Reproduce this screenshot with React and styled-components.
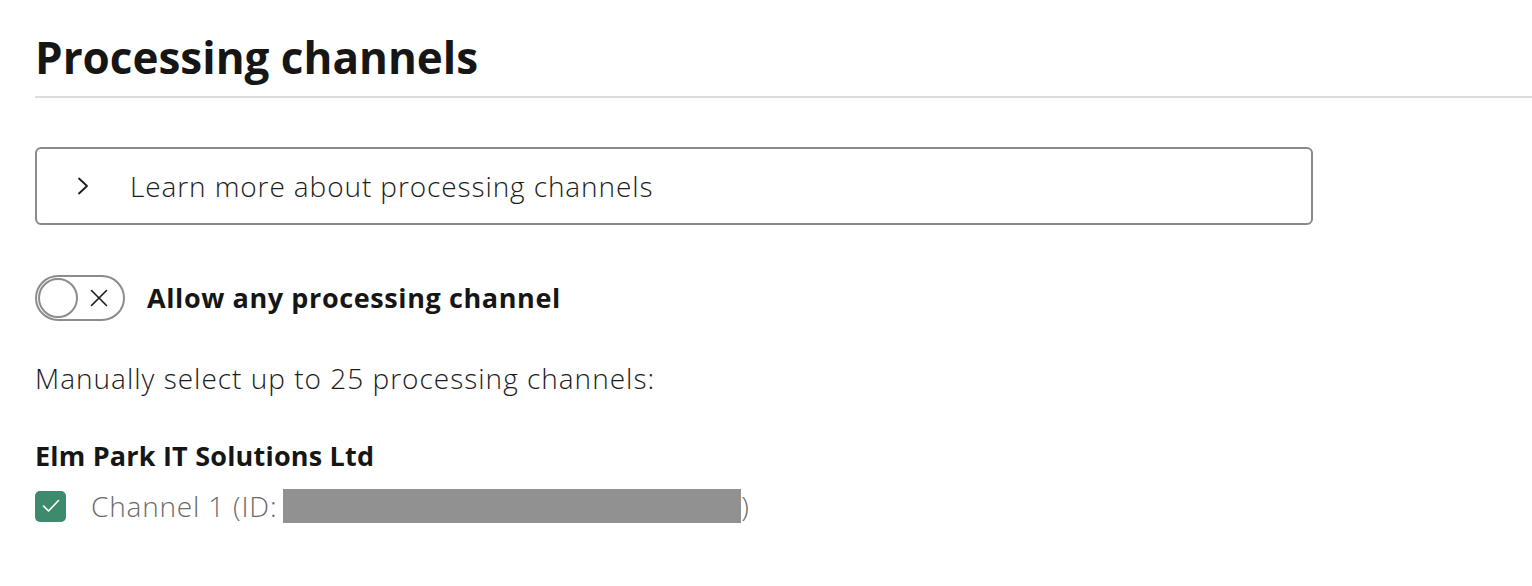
import styled, { createGlobalStyle } from "styled-components";

const GlobalStyle = createGlobalStyle`
    html, body {
        margin: 0;
        padding: 0;
        background: #ffffff;
    }
    body {
        font-family: "Open Sans", "Lato", sans-serif;
        color: #1c1c1c;
    }
`

const ChevronIcon = () => (
    <svg width="16" height="20" viewBox="0 0 16 20" fill="none">
        <path d="M4 2.5 L12 10 L4 17.5" stroke="#1c1c1c" strokeWidth="1.8" strokeLinecap="round" strokeLinejoin="round" />
    </svg>
)

const CrossIcon = () => (
    <svg width="18" height="18" viewBox="0 0 18 18" fill="none">
        <path d="M1.5 1.5 L16.5 16.5 M16.5 1.5 L1.5 16.5" stroke="#1c1c1c" strokeWidth="1.6" strokeLinecap="round" />
    </svg>
)

const CheckIcon = () => (
    <svg width="18" height="14" viewBox="0 0 18 14" fill="none">
        <path d="M1.5 7 L6.5 12 L16.5 1.5" stroke="#ffffff" strokeWidth="1.6" strokeLinecap="round" strokeLinejoin="round" />
    </svg>
)

const App = () => {

    return (
        <>
            <GlobalStyle />
            <Page>
                <Header>
                    <Title>Processing channels</Title>
                </Header>
                <Content>
                    <Accordion>
                        <ChevronIcon />
                        <AccordionLabel>Learn more about processing channels</AccordionLabel>
                    </Accordion>
                    <ToggleRow>
                        <Toggle>
                            <Knob />
                            <CrossWrap>
                                <CrossIcon />
                            </CrossWrap>
                        </Toggle>
                        <ToggleLabel>Allow any processing channel</ToggleLabel>
                    </ToggleRow>
                    <Hint>Manually select up to 25 processing channels:</Hint>
                    <Group>
                        <GroupName>Elm Park IT Solutions Ltd</GroupName>
                        <ChannelRow>
                            <Checkbox>
                                <CheckIcon />
                            </Checkbox>
                            <ChannelLabel>
                                Channel 1 (ID: <Redacted />)
                            </ChannelLabel>
                        </ChannelRow>
                    </Group>
                </Content>
            </Page>
        </>
    )
};

const Page = styled.div`
    width: 1532px;
    height: 586px;
    padding-left: 35px;
    box-sizing: border-box;
    overflow: hidden;
`

const Header = styled.div`
    padding-top: 33px;
    padding-bottom: 15px;
    border-bottom: 2px solid #dcdcdc;
`

const Title = styled.h1`
    margin: 0;
    font-size: 44px;
    line-height: 48px;
    font-weight: 700;
    color: #161616;
`

const Content = styled.div`
    display: flex;
    flex-direction: column;
    align-items: flex-start;
    padding-top: 49px;
`

const Accordion = styled.div`
    display: flex;
    align-items: center;
    gap: 39px;
    width: 1278px;
    height: 78px;
    box-sizing: border-box;
    padding-left: 38px;
    border: 2px solid #8a8a8a;
    border-radius: 6px;
`

const AccordionLabel = styled.span`
    font-size: 28px;
    line-height: 36px;
    font-weight: 300;
    letter-spacing: 0.9px;
    color: #1c1c1c;
`

const ToggleRow = styled.div`
    display: flex;
    align-items: center;
    gap: 22px;
    margin-top: 50px;
`

const Toggle = styled.div`
    display: flex;
    align-items: center;
    justify-content: space-between;
    width: 90px;
    height: 46px;
    box-sizing: border-box;
    padding: 0 15px 0 1px;
    border: 2px solid #8c8c8c;
    border-radius: 23px;
`

const Knob = styled.div`
    width: 40px;
    height: 40px;
    box-sizing: border-box;
    border: 2px solid #8c8c8c;
    border-radius: 50%;
    background: #ffffff;
`

const CrossWrap = styled.div`
    display: flex;
`

const ToggleLabel = styled.span`
    font-size: 27px;
    line-height: 36px;
    font-weight: 700;
    letter-spacing: 0.6px;
    color: #161616;
`

const Hint = styled.p`
    margin: 39px 0 0;
    font-size: 28px;
    line-height: 36px;
    font-weight: 300;
    letter-spacing: 1px;
    color: #1c1c1c;
`

const Group = styled.div`
    display: flex;
    flex-direction: column;
    margin-top: 42px;
`

const GroupName = styled.div`
    font-size: 27px;
    line-height: 36px;
    font-weight: 700;
    letter-spacing: 0.2px;
    color: #161616;
`

const ChannelRow = styled.div`
    display: flex;
    align-items: center;
    gap: 25px;
    margin-top: 14px;
`

const Checkbox = styled.div`
    display: flex;
    align-items: center;
    justify-content: center;
    width: 31px;
    height: 31px;
    border-radius: 5px;
    background: #3e8a6d;
`

const ChannelLabel = styled.span`
    display: flex;
    align-items: center;
    font-size: 28px;
    line-height: 36px;
    font-weight: 300;
    letter-spacing: 0.8px;
    color: #6b6b6b;
`

const Redacted = styled.span`
    display: inline-block;
    width: 458px;
    height: 34px;
    margin-left: 6px;
    background: #919191;
`

export default App;
